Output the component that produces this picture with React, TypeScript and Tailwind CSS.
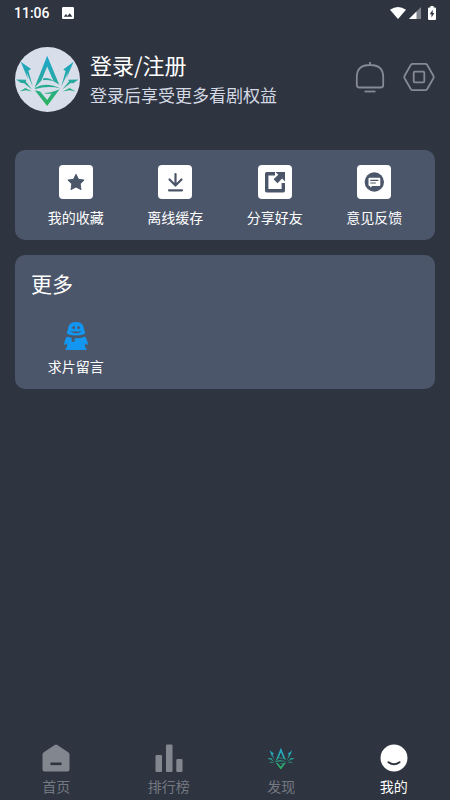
import type { ReactNode } from 'react';

function LotusMark({ id, className }: { id: string; className: string }) {
  return (
    <svg viewBox="23 20 194 194" className={className} aria-hidden="true">
      <defs>
        <linearGradient id={id} x1="0" y1="46" x2="0" y2="194" gradientUnits="userSpaceOnUse">
          <stop offset="0" stopColor="#1fa6cf" />
          <stop offset="0.5" stopColor="#27a9a0" />
          <stop offset="1" stopColor="#2bb35c" />
        </linearGradient>
      </defs>
      <g fill={`url(#${id})`}>
        <path d="M119 46 L155 133 L138 122 L119 78 L102 120 L81 142 Z" />
        <path d="M108 113 Q126 111 138 122 Q123 118 106 119 Z" />
        <path d="M82 142 Q115 122 160 144 Q122 135 84 145 Z" />
        <path d="M82 149 L98 153 L119 178 L133 158 Q121 162 110 157 Q132 157 156 146 L119 196 Z" />
        <path d="M40 64 L71 86 L63 91 L76 138 L57 95 L62 117 Z" />
        <path d="M198 64 L167 87 L174 92 L161 139 L181 96 L176 115 Z" />
        <path d="M26 117 L57 118 L55 123 L74 147 L50 128 L40 127 L52 135 Z" />
        <path d="M213 117 L182 118 L184 123 L164 147 L188 128 L200 127 L187 135 Z" />
        <path d="M37 153 L54 142 L74 153 L55 149 Z" />
        <path d="M204 153 L186 142 L165 153 L186 149 Z" />
      </g>
    </svg>
  );
}

function StatusBar() {
  return (
    <div className="flex h-6 items-center justify-between px-[14px] pt-px">
      <div className="flex items-center gap-3">
        <span className="font-['Roboto',sans-serif] text-sm font-medium leading-none">11:06</span>
        <svg viewBox="0 0 12 12" className="size-3" aria-hidden="true">
          <path fill="#fff" fillRule="evenodd" d="M1.3 0h9.4Q12 0 12 1.3v9.4Q12 12 10.7 12H1.3Q0 12 0 10.7V1.3Q0 0 1.3 0ZM1.8 9.8h8.6L7.7 6.2 5.5 8.9 4 7.1Z" />
        </svg>
      </div>
      <div className="flex items-center">
        <svg viewBox="0 0 16 12" className="h-3 w-4" aria-hidden="true">
          <path fill="#fff" d="M0 2.8Q8-2.8 16 2.8L8 12Z" />
        </svg>
        <svg viewBox="0 0 12 12" className="ml-[3px] size-3" aria-hidden="true">
          <path fill="#7f838b" d="M12 0v12H0Z" />
          <path fill="#fff" d="M7.5 4.5V12H0Z" />
        </svg>
        <svg viewBox="0 0 8 14" className="ml-[7px] h-[14px] w-2" aria-hidden="true">
          <path fill="#fff" d="M2.4 0h3.2v1.4H7q1 0 1 1V13q0 1-1 1H1q-1 0-1-1V2.4q0-1 1-1h1.4Z" />
          <path fill="#2e3440" d="M4.7 3.7 1.8 8.3h1.7v3.2L6.3 7H4.7Z" />
        </svg>
      </div>
    </div>
  );
}

function Tile({ children }: { children: ReactNode }) {
  return (
    <svg viewBox="0 0 34 34" className="size-[34px]" aria-hidden="true">
      <rect width="34" height="34" rx="4" fill="#fff" />
      {children}
    </svg>
  );
}

const shortcuts = [
  {
    label: '我的收藏',
    icon: (
      <Tile>
        <path
          fill="#4c566a"
          stroke="#4c566a"
          strokeLinejoin="round"
          d="m17 9.300 2.500 5 5.600.8-4 3.900.9 5.600-5-2.600-5 2.600.9-5.600-4-3.900 5.600-.8Z"
        />
      </Tile>
    ),
  },
  {
    label: '离线缓存',
    icon: (
      <Tile>
        <path d="M17.500 9v11.500M11.500 14.500l6 6 6-6M11 25.300h13" fill="none" stroke="#4c566a" strokeWidth="2.2" strokeLinecap="round" />
      </Tile>
    ),
  },
  {
    label: '分享好友',
    icon: (
      <Tile>
        <path d="M17 8.700H8.700v17h16.600V18" fill="none" stroke="#4c566a" strokeWidth="3.400" strokeLinejoin="round" />
        <path d="M17.500 7H27v9.500l-2.900-2.900-4.600 4.600-3.900-3.900 4.700-4.500Z" fill="#4c566a" />
      </Tile>
    ),
  },
  {
    label: '意见反馈',
    icon: (
      <Tile>
        <circle cx="17.300" cy="17" r="9.700" fill="#4c566a" />
        <path d="M12.500 12.700h9.800q1 0 1 1v6.200q0 1-1 1h-7.100l-2 1.800v-1.800h-.7q-1 0-1-1v-6.200q0-1 1-1Z" fill="#fff" />
        <path d="M13.300 15.400h8M13.300 18h5.500" stroke="#4c566a" strokeWidth="1.100" />
      </Tile>
    ),
  },
];

const tabs = [
  {
    label: '首页',
    active: false,
    icon: (
      <svg viewBox="0 0 28 28" className="size-7" aria-hidden="true">
        <path
          fill="#82868f"
          d="M12.700.9q1.300-.9 2.600 0L26.200 8.200q1.300.9 1.300 2.300v15q0 2-2 2h-23q-2 0-2-2v-15q0-1.400 1.300-2.300Z"
        />
        <path d="M8.500 19.800h11" stroke="#2e3440" strokeWidth="2.600" />
      </svg>
    ),
  },
  {
    label: '排行榜',
    active: false,
    icon: (
      <svg viewBox="0 0 28 28" className="size-7" aria-hidden="true">
        <g fill="#82868f">
          <rect x="0.500" y="11" width="6.500" height="17" rx="1" />
          <rect x="11" y="0.500" width="6.500" height="27.500" rx="1" />
          <rect x="21.300" y="15" width="6.200" height="13" rx="1" />
        </g>
      </svg>
    ),
  },
  { label: '发现', active: false, icon: <LotusMark id="lotus-tab" className="size-7" /> },
  {
    label: '我的',
    active: true,
    icon: (
      <svg viewBox="0 0 28 28" className="size-7" aria-hidden="true">
        <circle cx="14" cy="14" r="13.500" fill="#fff" />
        <path d="M8.500 18.200q5.500 4 11 0" fill="none" stroke="#2e3440" strokeWidth="2" strokeLinecap="round" />
      </svg>
    ),
  },
];

function Penguin() {
  return (
    <svg viewBox="0 0 26 30" className="h-[30px] w-[26px]" aria-hidden="true">
      <g fill="#1296f0">
        <path d="M13 1C18.500 1 21 4.500 21 8.500q1.400 1.800.7 4.500Q13 16.200 4.300 13 3.600 10.300 5 8.500C5 4.500 7.500 1 13 1Z" />
        <path d="M3.800 15.400q2.200 1 4.900 1.400v4h2.800v-3.500q6 .2 10.700-1.900 2.300 3.600 2.800 7.800-.8 1.200-3-.8v3.600q1.600 1.200 1.500 3H2.500q-.1-1.800 1.500-3v-3.600q-2.200 2-3 .8.500-4.200 2.800-7.800Z" />
      </g>
      <g fill="#4c566a">
        <ellipse cx="10.700" cy="6.600" rx="1.300" ry="1.700" />
        <ellipse cx="15.600" cy="6.600" rx="1.300" ry="1.700" />
        <path d="M7.500 10.200q5.500.8 11 0-2 2-5.500 2t-5.500-2Z" />
      </g>
    </svg>
  );
}

export default function App() {
  return (
    <div className="flex min-h-screen flex-col bg-[#2e3440] font-['Noto_Sans_CJK_SC',sans-serif] text-white">
      <StatusBar />

      <header className="mt-[23px] flex items-center px-[15px]">
        <div className="size-[65px] shrink-0 overflow-hidden rounded-full bg-[#d8deea]">
          <LotusMark id="lotus-avatar" className="size-full" />
        </div>
        <a href="#login" className="ml-[10px] flex flex-col gap-px">
          <span className="text-[22px] leading-[30px]">登录/注册</span>
          <span className="text-[17px] leading-[30px] text-[#d4d9e3]">登录后享受更多看剧权益</span>
        </a>
        <div className="ml-auto flex items-center gap-[18px] pb-[5px]">
          <button type="button" aria-label="消息">
            <svg viewBox="0 0 30 34" className="h-[34px] w-[30px]" fill="none" stroke="#858b95" strokeWidth="1.800" aria-hidden="true">
              <path d="M15 2v3M1.800 17Q1.800 5 15 5T28.200 17v8q0 2.500-2.500 2.500H4.300q-2.500 0-2.500-2.500Z" />
              <path d="M9.500 31.500h11" />
            </svg>
          </button>
          <button type="button" aria-label="设置">
            <svg viewBox="0 0 32 32" className="size-8" fill="none" stroke="#858b95" strokeWidth="1.800" strokeLinejoin="round" aria-hidden="true">
              <path d="M9.700 2.800h12.600q1.200 0 1.800 1l6.300 11q.6 1.200 0 2.400l-6.300 11q-.6 1-1.800 1H9.700q-1.200 0-1.800-1l-6.300-11q-.6-1.200 0-2.400l6.300-11q.6-1 1.800-1Z" />
              <rect x="10.700" y="10.700" width="10.600" height="10.600" rx="1" />
            </svg>
          </button>
        </div>
      </header>

      <main className="mt-[38px] flex flex-col gap-[15px] px-[15px]">
        <section className="grid grid-cols-4 rounded-[10px] bg-[#4c566a] px-[11px] pb-[13px] pt-[15px]">
          {shortcuts.map((item) => (
            <button key={item.label} type="button" className="flex flex-col items-center gap-2">
              {item.icon}
              <span className="text-sm leading-5">{item.label}</span>
            </button>
          ))}
        </section>

        <section className="rounded-[10px] bg-[#4c566a] px-[11px] pb-[13px] pt-3">
          <h2 className="pl-[5px] text-[21px] leading-8">更多</h2>
          <div className="mt-[22px] grid grid-cols-4">
            <button type="button" className="flex flex-col items-center gap-[5px]">
              <Penguin />
              <span className="text-sm leading-5">求片留言</span>
            </button>
          </div>
        </section>
      </main>

      <nav className="mt-auto grid grid-cols-4 pb-1">
        {tabs.map((tab) => (
          <button
            key={tab.label}
            type="button"
            aria-current={tab.active ? 'page' : undefined}
            className={`flex flex-col items-center gap-1 ${tab.active ? 'text-white' : 'text-[#747982]'}`}
          >
            {tab.icon}
            <span className="text-sm leading-5">{tab.label}</span>
          </button>
        ))}
      </nav>
    </div>
  );
}
